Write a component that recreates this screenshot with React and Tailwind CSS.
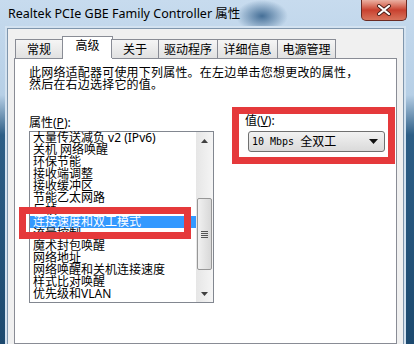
import React from 'react'

const items = [
  '大量传送减负 v2 (IPv6)',
  '关机 网络唤醒',
  '环保节能',
  '接收端调整',
  '接收缓冲区',
  '节能乙太网路',
  '巨帧',
  '连接速度和双工模式',
  '流量控制',
  '魔术封包唤醒',
  '网络地址',
  '网络唤醒和关机连接速度',
  '样式比对唤醒',
  '优先级和VLAN',
]

const tabs = [
  { label: '常规', w: 'w-[48px]' },
  { label: '高级', w: 'w-[51px]', active: true },
  { label: '关于', w: 'w-[48px]' },
  { label: '驱动程序', w: 'w-[60px]' },
  { label: '详细信息', w: 'w-[61px]' },
  { label: '电源管理', w: 'w-[59px]' },
]

const Arrow = ({ up }) => (
  <svg width="7" height="4" viewBox="0 0 7 4">
    <path d={up ? 'M0 4 L3.5 0 L7 4 Z' : 'M0 0 L7 0 L3.5 4 Z'} fill="#404040" />
  </svg>
)

export default function App() {
  return (
    <div className="w-[414px] h-[344px] overflow-hidden flex flex-col font-['Noto_Sans','Noto_Sans_CJK_SC',sans-serif] bg-[radial-gradient(ellipse_26px_16px_at_262px_16px,#456f97,transparent),linear-gradient(to_bottom,#c7dbee,#b6cfe6_95px,#2d5e86_135px,#1d4a6f)]">
      {/* title bar */}
      <div className="h-[28px] shrink-0 flex items-start">
        <span className="pl-[8px] pt-[6px] text-[12.5px] leading-[16px] text-black">
          Realtek PCIe GBE Family Controller 属性
        </span>
        <div className="ml-auto mr-[7px] w-[46px] h-[21px] rounded-b-[5px] border border-t-0 border-[#6a2a22] bg-gradient-to-b from-[#eab0a2] via-[#c8402f] to-[#d8735c] flex items-center justify-center">
          <svg width="16" height="12" viewBox="0 0 16 12">
            <path d="M3 2 L13 10 M13 2 L3 10" stroke="#4a1d17" strokeWidth="4" strokeLinecap="round" />
            <path d="M3 2 L13 10 M13 2 L3 10" stroke="#ffffff" strokeWidth="2.2" strokeLinecap="round" />
          </svg>
        </div>
      </div>

      <div className="flex-1 flex pl-[7px] pr-[10px]">
        <div className="flex-1 flex flex-col bg-[#f0f0f0] border border-b-0 border-[#7f96ad] shadow-[0_0_0_2px_#d3e2f0] px-[6px] pt-[7px]">
          {/* tabs */}
          <div className="relative z-10 flex items-end h-[22px] pl-[1px]">
            {tabs.map((t, i) =>
              t.active ? (
                <div
                  key={t.label}
                  className={`${t.w} -ml-[1px] -mr-[1px] h-[23px] -mb-[1px] bg-white border border-b-0 border-[#898c95] text-center text-[12px] leading-[18px] text-black`}
                >
                  {t.label}
                </div>
              ) : (
                <div
                  key={t.label}
                  className={`${t.w} ${i > 0 ? '-ml-[1px]' : ''} h-[19px] bg-gradient-to-b from-[#f5f5f5] to-[#e1e1e1] border border-b-0 border-[#898c95] text-center text-[12px] leading-[19px] text-black`}
                >
                  {t.label}
                </div>
              )
            )}
          </div>

          {/* panel */}
          <div className="flex-1 bg-white border border-[#898c95] pl-[14px] pt-[8px] text-[12px] leading-[12px] text-black">
            <div className="tracking-[0.2px]">此网络适配器可使用下列属性。在左边单击您想更改的属性，</div>
            <div className="tracking-[0.2px]">然后在右边选择它的值。</div>

            <div className="flex items-start mt-[16px]">
              <div className="w-[185px] pt-[10px]">
                <div className="mb-[2px]">
                  属性(<span className="underline">P</span>):
                </div>
                <div className="relative h-[172px] border border-[#828790] bg-white flex">
                  <div className="flex-1">
                    {items.map((it, i) => (
                      <div
                        key={it}
                        className={`h-[12px] leading-[12px] pl-[3px] whitespace-nowrap ${
                          i === 7 ? 'bg-[#3399ff] text-white' : ''
                        }`}
                      >
                        {it}
                      </div>
                    ))}
                  </div>
                  <div className="w-[17px] flex flex-col bg-gradient-to-r from-[#e6e6e6] to-[#f5f5f5]">
                    <div className="h-[17px] flex items-center justify-center">
                      <Arrow up />
                    </div>
                    <div className="flex-1">
                      <div className="mt-[49px] mx-[1px] h-[72px] rounded-[2px] border border-[#979797] bg-gradient-to-r from-[#f1f1f1] to-[#d8d8d8] flex items-center justify-center">
                        <div className="flex flex-col gap-[1px]">
                          <div className="w-[7px] h-[1px] bg-[#555]" />
                          <div className="w-[7px] h-[1px] bg-[#555]" />
                          <div className="w-[7px] h-[1px] bg-[#555]" />
                          <div className="w-[7px] h-[1px] bg-[#555]" />
                        </div>
                      </div>
                    </div>
                    <div className="h-[17px] flex items-center justify-center">
                      <Arrow />
                    </div>
                  </div>
                  {/* annotation */}
                  <div className="absolute left-[-11px] top-[75px] w-[172px] h-[32px] border-[7px] border-[#e5393b] pointer-events-none" />
                </div>
              </div>

              <div className="ml-[18px] w-[163px] h-[57px] border-[7px] border-[#e5393b] pl-[6px] pt-[1px]">
                <div>
                  值(<span className="underline">V</span>):
                </div>
                <div className="mt-[4px] ml-[3px] w-[137px] h-[21px] rounded-[3px] border border-[#707070] bg-gradient-to-b from-[#f2f2f2] to-[#dadada] flex items-center pl-[3px] pr-[6px]">
                  <span className="font-['DejaVu_Sans_Mono',monospace] text-[10px]">10 Mbps&nbsp;</span>
                  <span>全双工</span>
                  <span className="ml-auto">
                    <svg width="9" height="5" viewBox="0 0 9 5">
                      <path d="M0 0 L9 0 L4.5 5 Z" fill="#111" />
                    </svg>
                  </span>
                </div>
              </div>
            </div>
          </div>
        </div>
      </div>
    </div>
  )
}
